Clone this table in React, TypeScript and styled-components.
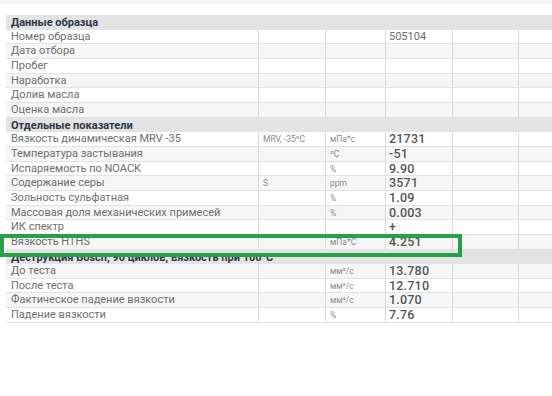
import React from "react";
import styled, { createGlobalStyle } from "styled-components";

const Global = createGlobalStyle`
  html, body {
    margin: 0;
    padding: 0;
    background: #ffffff;
    overflow: hidden;
  }
  body {
    font-family: Roboto, "Liberation Sans", sans-serif;
  }
`;

const Page = styled.div`
  position: relative;
  width: 552px;
  height: 396px;
  overflow: hidden;
  background: #ffffff;
  border-top: 4px solid #f6f6f6;
  box-sizing: border-box;
  padding: 11px 0 0 6px;
`;

const Table = styled.div`
  width: 560px;
  display: flex;
  flex-direction: column;
`;

const SectionHead = styled.div`
  height: 14.67px;
  line-height: 15px;
  background: #e3e3e3;
  padding-left: 5px;
  font-size: 11px;
  font-weight: 700;
  color: #2d3645;
  white-space: nowrap;
  overflow: hidden;
`;

const Row = styled.div<{ $shade: boolean }>`
  height: 14.67px;
  box-sizing: border-box;
  display: grid;
  grid-template-columns: 253px 67px 60px 67px 66px 1fr;
  background: ${(p) => (p.$shade ? "#f6f6f6" : "#ffffff")};
  border-bottom: 1px solid #e2e2e2;
`;

const Cell = styled.div`
  border-right: 1px solid #dadada;
  white-space: nowrap;
  overflow: hidden;
  line-height: 14px;
`;

const Label = styled(Cell)`
  padding-left: 5px;
  font-size: 11px;
  color: #6e6e6e;
`;

const Small = styled(Cell)`
  padding-left: 4px;
  font-size: 8.5px;
  color: #8a8a8a;
`;

const Value = styled(Cell)<{ $strong: boolean }>`
  padding-left: 3px;
  font-size: ${(p) => (p.$strong ? "12.5px" : "11px")};
  font-weight: ${(p) => (p.$strong ? 500 : 400)};
  color: ${(p) => (p.$strong ? "#555555" : "#6a6a6a")};
  letter-spacing: ${(p) => (p.$strong ? "0.2px" : "0")};
`;

const Highlight = styled.div`
  position: absolute;
  left: 0;
  top: 230px;
  width: 462px;
  height: 23px;
  box-sizing: border-box;
  border: 4px solid #27a147;
  pointer-events: none;
`;

type Item = { label: string; method?: string; unit?: string; value?: string };

type Section = { title: string; strong: boolean; startShade: boolean; items: Item[] };

const sections: Section[] = [
  {
    title: "Данные образца",
    strong: false,
    startShade: false,
    items: [
      { label: "Номер образца", value: "505104" },
      { label: "Дата отбора" },
      { label: "Пробег" },
      { label: "Наработка" },
      { label: "Долив масла" },
      { label: "Оценка масла" },
    ],
  },
  {
    title: "Отдельные показатели",
    strong: true,
    startShade: false,
    items: [
      { label: "Вязкость динамическая MRV -35", method: "MRV, -35ºC", unit: "мПа*с", value: "21731" },
      { label: "Температура застывания", unit: "ºС", value: "-51" },
      { label: "Испаряемость по NOACK", unit: "%", value: "9.90" },
      { label: "Содержание серы", method: "S", unit: "ppm", value: "3571" },
      { label: "Зольность сульфатная", unit: "%", value: "1.09" },
      { label: "Массовая доля механических примесей", unit: "%", value: "0.003" },
      { label: "ИК спектр", value: "+" },
      { label: "Вязкость HTHS", unit: "мПа*С", value: "4.251" },
    ],
  },
  {
    title: "Деструкция Bosch, 90 циклов, вязкость при 100°С",
    strong: true,
    startShade: true,
    items: [
      { label: "До теста", unit: "мм²/с", value: "13.780" },
      { label: "После теста", unit: "мм²/с", value: "12.710" },
      { label: "Фактическое падение вязкости", unit: "мм²/с", value: "1.070" },
      { label: "Падение вязкости", unit: "%", value: "7.76" },
    ],
  },
];

export default function App() {
  return (
    <>
      <Global />
      <Page>
        <Table>
          {sections.map((s) => (
            <React.Fragment key={s.title}>
              <SectionHead>{s.title}</SectionHead>
              {s.items.map((it, i) => (
                <Row key={it.label} $shade={(i % 2 === 1) !== s.startShade}>
                  <Label>{it.label}</Label>
                  <Small>{it.method}</Small>
                  <Small>{it.unit}</Small>
                  <Value $strong={s.strong}>{it.value}</Value>
                  <Cell />
                  <Cell />
                </Row>
              ))}
            </React.Fragment>
          ))}
        </Table>
        <Highlight />
      </Page>
    </>
  );
}
